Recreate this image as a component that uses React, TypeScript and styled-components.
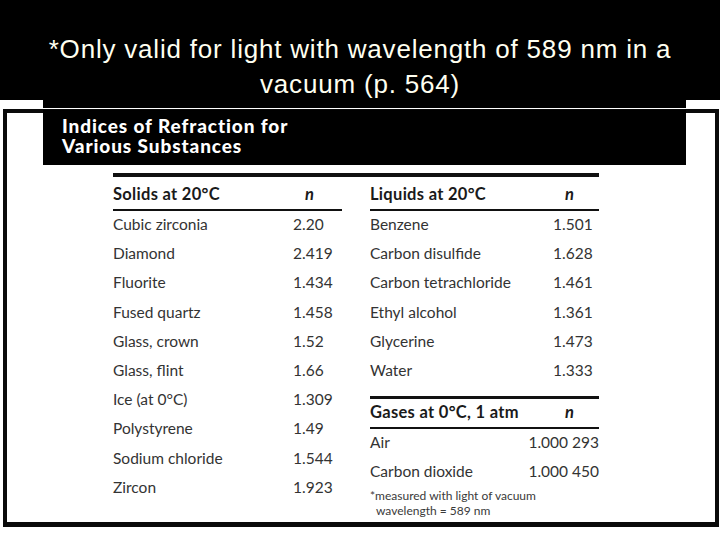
import styled, { createGlobalStyle } from 'styled-components'

const GlobalStyle = createGlobalStyle`
	html, body {
		margin: 0;
		padding: 0;
		background: #fff;
	}
`

const solids = [
	['Cubic zirconia', '2.20'],
	['Diamond', '2.419'],
	['Fluorite', '1.434'],
	['Fused quartz', '1.458'],
	['Glass, crown', '1.52'],
	['Glass, flint', '1.66'],
	['Ice (at 0°C)', '1.309'],
	['Polystyrene', '1.49'],
	['Sodium chloride', '1.544'],
	['Zircon', '1.923'],
]

const liquids = [
	['Benzene', '1.501'],
	['Carbon disulfide', '1.628'],
	['Carbon tetrachloride', '1.461'],
	['Ethyl alcohol', '1.361'],
	['Glycerine', '1.473'],
	['Water', '1.333'],
]

const gases = [
	['Air', '1.000 293'],
	['Carbon dioxide', '1.000 450'],
]

const App = () => {
	return (
		<>
			<GlobalStyle />
			<Page>
				<Caption>
					*Only valid for light with wavelength of 589 nm in a
					<br />
					vacuum (p. 564)
				</Caption>
				<Strip />
				<Frame>
					<TitleBand>
						<TitleLine>Indices of Refraction for</TitleLine>
						<TitleLine>Various Substances</TitleLine>
					</TitleBand>
					<Table>
						<Column>
							<HeadRow $nameWidth={180}>
								<span>Solids at 20°C</span>
								<N>n</N>
							</HeadRow>
							{solids.map(([name, n]) => (
								<Row key={name} $nameWidth={180}>
									<span>{name}</span>
									<span>{n}</span>
								</Row>
							))}
						</Column>
						<Column>
							<HeadRow $nameWidth={183}>
								<span>Liquids at 20°C</span>
								<N>n</N>
							</HeadRow>
							{liquids.map(([name, n]) => (
								<Row key={name} $nameWidth={183}>
									<span>{name}</span>
									<span>{n}</span>
								</Row>
							))}
							<GasBlock>
								<HeadRow $nameWidth={183} $compact>
									<span>Gases at 0°C, 1 atm</span>
									<N>n</N>
								</HeadRow>
								{gases.map(([name, n]) => (
									<Row key={name} $spread>
										<span>{name}</span>
										<span>{n}</span>
									</Row>
								))}
								<Footnote>
									*measured with light of vacuum
									<br />
									wavelength = 589 nm
								</Footnote>
							</GasBlock>
						</Column>
					</Table>
				</Frame>
			</Page>
		</>
	)
}

const Page = styled.div`
	width: 720px;
	height: 540px;
	overflow: hidden;
	background: #fff;
`

const Caption = styled.div`
	height: 100px;
	box-sizing: border-box;
	padding-top: 32px;
	background: #000;
	color: #fffff0;
	font-family: 'Liberation Sans', Arial, sans-serif;
	font-size: 26px;
	letter-spacing: 0.8px;
	line-height: 34.5px;
	text-align: center;
	white-space: nowrap;
`

const Strip = styled.div`
	height: 8px;
	width: 643px;
	margin: 0 0 1px 43px;
	background: #000;
`

const Frame = styled.div`
	width: 716px;
	height: 418px;
	box-sizing: border-box;
	margin-left: 3px;
	border: 4px solid #0a0a0a;
	border-bottom-width: 5px;
`

const TitleBand = styled.div`
	width: 643px;
	height: 55px;
	box-sizing: border-box;
	margin: -3px 0 0 36px;
	padding: 7px 0 0 19px;
	background: #000;
	color: #fff;
	font-family: Lato, 'Open Sans', sans-serif;
	font-weight: 900;
	font-size: 19px;
	letter-spacing: 0.9px;
`

const TitleLine = styled.div`
	height: 20px;
	line-height: 18px;
`

const Table = styled.div`
	display: flex;
	gap: 28px;
	width: 486px;
	margin: 8px 0 0 106px;
	border-top: 4px solid #111;
	font-family: Lato, 'Open Sans', sans-serif;
	color: #333;
`

const Column = styled.div`
	width: 229px;
	display: flex;
	flex-direction: column;
`

const HeadRow = styled.div<{ $nameWidth: number; $compact?: boolean }>`
	display: flex;
	box-sizing: border-box;
	height: ${(p) => (p.$compact ? 30 : 34)}px;
	padding-top: ${(p) => (p.$compact ? 4 : 8)}px;
	border-bottom: 2px solid #111;
	font-size: 16.5px;
	font-weight: 700;
	letter-spacing: 0.3px;
	line-height: 19px;
	color: #1a1a1a;
	white-space: nowrap;

	& > span:first-child {
		width: ${(p) => p.$nameWidth + 12}px;
	}
`

const N = styled.span`
	font-style: italic;
`

const Row = styled.div<{ $nameWidth?: number; $spread?: boolean }>`
	display: flex;
	justify-content: ${(p) => (p.$spread ? 'space-between' : 'flex-start')};
	height: 29.2px;
	font-size: 15.5px;
	line-height: 26.5px;
	white-space: nowrap;

	& > span:first-child {
		width: ${(p) => (p.$nameWidth ? `${p.$nameWidth}px` : 'auto')};
	}
`

const GasBlock = styled.div`
	margin-top: 10px;
	border-top: 3px solid #111;
`

const Footnote = styled.div`
	padding-left: 6px;
	text-indent: -6px;
	font-size: 12px;
	line-height: 15px;
	color: #3a3a3a;
`

export default App
